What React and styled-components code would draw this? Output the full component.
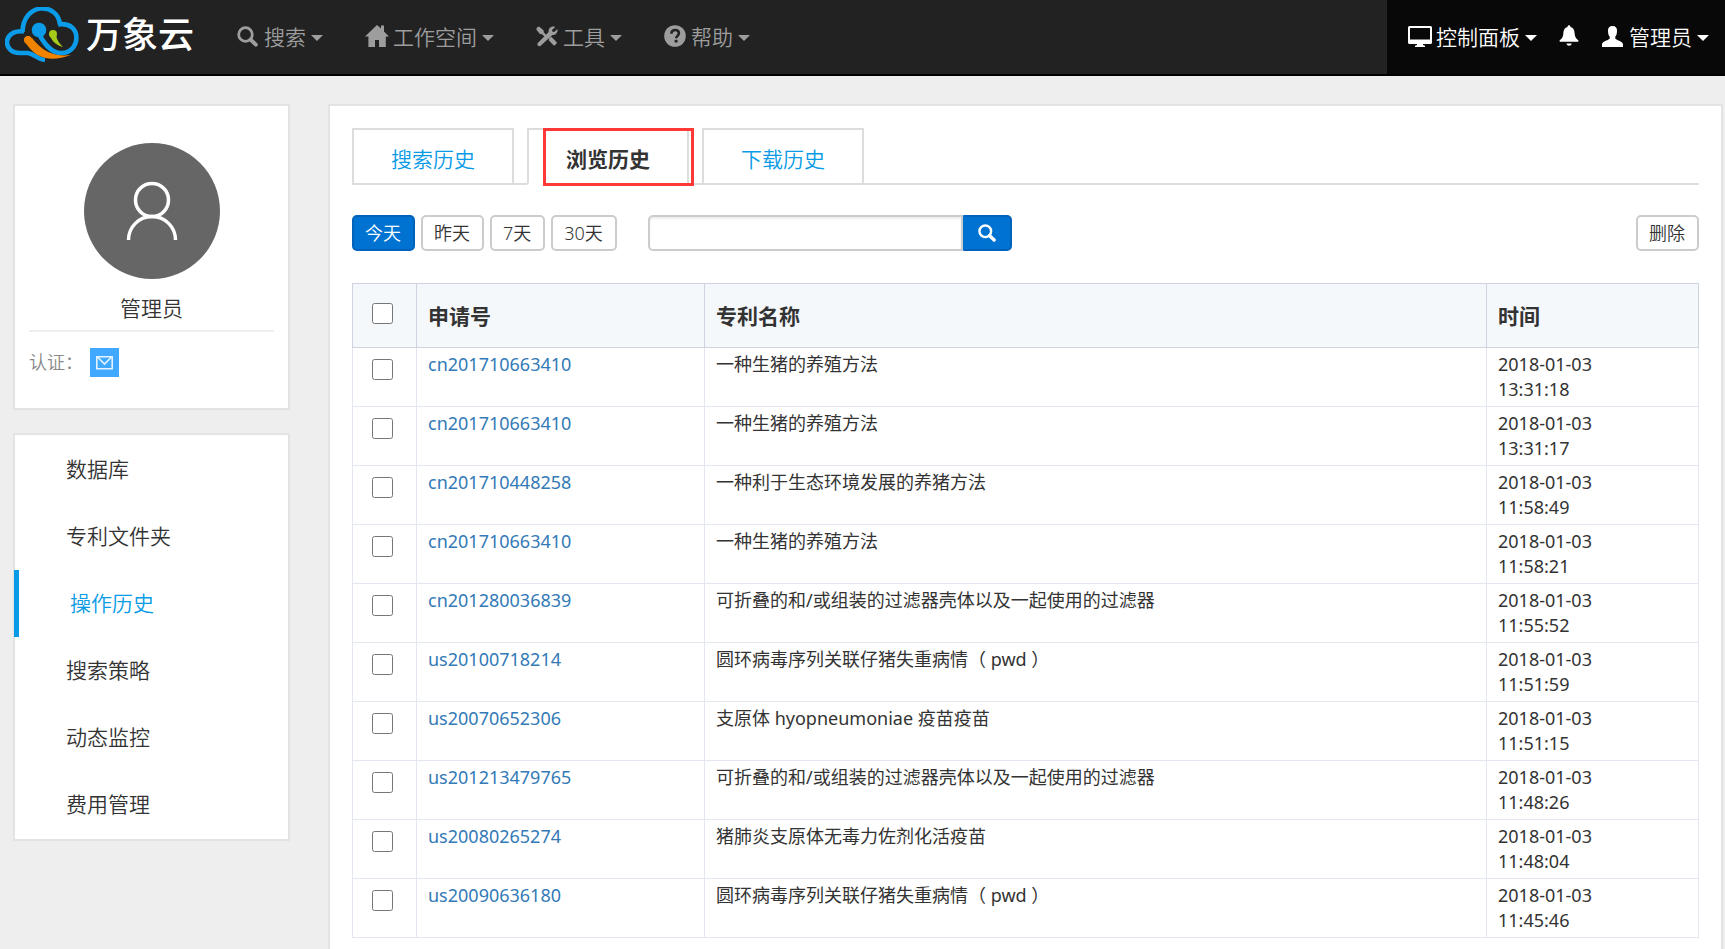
import React from 'react';
import styled, {createGlobalStyle, css} from 'styled-components';

const tabs = ['搜索历史', '浏览历史', '下载历史'];
const ranges = ['今天', '昨天', '7天', '30天'];
const menus = ['数据库', '专利文件夹', '操作历史', '搜索策略', '动态监控', '费用管理'];

const records = [
	{id: 'cn201710663410', name: '一种生猪的养殖方法', date: '2018-01-03', time: '13:31:18'},
	{id: 'cn201710663410', name: '一种生猪的养殖方法', date: '2018-01-03', time: '13:31:17'},
	{id: 'cn201710448258', name: '一种利于生态环境发展的养猪方法', date: '2018-01-03', time: '11:58:49'},
	{id: 'cn201710663410', name: '一种生猪的养殖方法', date: '2018-01-03', time: '11:58:21'},
	{id: 'cn201280036839', name: '可折叠的和/或组装的过滤器壳体以及一起使用的过滤器', date: '2018-01-03', time: '11:55:52'},
	{id: 'us20100718214', name: '圆环病毒序列关联仔猪失重病情（ pwd ）', date: '2018-01-03', time: '11:51:59'},
	{id: 'us20070652306', name: '支原体 hyopneumoniae 疫苗疫苗', date: '2018-01-03', time: '11:51:15'},
	{id: 'us201213479765', name: '可折叠的和/或组装的过滤器壳体以及一起使用的过滤器', date: '2018-01-03', time: '11:48:26'},
	{id: 'us20080265274', name: '猪肺炎支原体无毒力佐剂化活疫苗', date: '2018-01-03', time: '11:48:04'},
	{id: 'us20090636180', name: '圆环病毒序列关联仔猪失重病情（ pwd ）', date: '2018-01-03', time: '11:45:46'}
];

const SearchIcon = ({size = 21}) => (
	<Icon width={size} height={size} viewBox="0 0 21 21">
		<circle cx="8.5" cy="8.5" r="6.8" fill="none" stroke="currentColor" strokeWidth="2.8"/>
		<path d="M13.6 13.6l5.2 5" stroke="currentColor" strokeWidth="4" strokeLinecap="round"/>
	</Icon>
);

const HomeIcon = () => (
	<Icon width="24" height="22" viewBox="0 0 24 22">
		<path d="M12 0l4 3.6V.6h3v5.8l5 5.2h-3.2V22H14v-7h-4v7H3.4V11.600H0z" fill="currentColor"/>
	</Icon>
);

const ToolsIcon = () => (
	<Icon width="22" height="21" viewBox="0 0 22 21">
		<path d="M1 1.500L3 .5l4.500 3.800.4 2.300 4 3.800-1.800 1.900-4-4-2.200-.3L.3 3.400z" fill="currentColor"/>
		<path d="M13.300 12l2-1.200 5.200 5.200c1 1-1.700 4.200-3 3.200l-4.800-5z" fill="currentColor"/>
		<path d="M19.200.9l-3.200 3 .3 1.700 1.900.4 3.200-2.900c.7 3.200-1.700 6.300-5 5.800L4.700 19.800c-1.600 1.400-4.300-.9-2.900-2.700L12.700 6c-.7-3.400 2.700-6.300 6.500-5.100z" fill="currentColor"/>
	</Icon>
);

const HelpIcon = () => (
	<Icon width="22" height="22" viewBox="0 0 22 22">
		<circle cx="11" cy="11" r="10.800" fill="currentColor"/>
		<path d="M7.400 8.700c0-2.400 1.500-3.700 3.700-3.700 2.300 0 3.800 1.200 3.800 3.200 0 2.500-2.700 2.700-2.700 5.100" fill="none" stroke="#222" strokeWidth="2.600"/>
		<path d="M10.600 14.800h3v2.700h-3z" fill="#222"/>
	</Icon>
);

const MonitorIcon = () => (
	<Icon width="24" height="21" viewBox="0 0 24 21">
		<path d="M1.500 0h21A1.500 1.500 0 0124 1.500v15a1.500 1.500 0 01-1.500 1.500H15v1l2 .7V21H7v-1.300L9 19v-1H1.500A1.500 1.500 0 010 16.500v-15A1.500 1.500 0 011.500 0zM2 2v11.500h20V2z" fill="currentColor"/>
	</Icon>
);

const BellIcon = () => (
	<Icon width="20" height="22" viewBox="0 0 20 22">
		<path d="M8.500 2c0-2.500 3-2.500 3 0 3.500 1 4 4 4.200 7 .3 3.500 1.800 4.700 3.800 6.500l-.3 1.300H.8L.500 15.500C2.500 13.700 4 12.500 4.300 9c.2-3 .7-6 4.200-7z" fill="currentColor"/>
		<path d="M7.500 18.500h5.200c-.5 3-4.700 3-5.200 0z" fill="currentColor"/>
	</Icon>
);

const UserIcon = () => (
	<Icon width="21" height="21" viewBox="0 0 21 21">
		<path d="M10.500 0c3.300 0 4.800 2 4.500 5-.1 3-.6 4.500-1.700 5.600v2c.2 1.300 7.700 3 7.700 5.700V21H0v-2.700c0-2.700 7.500-4.400 7.700-5.700v-2C6.600 9.500 6.100 8 6 5c-.3-3 1.200-5 4.500-5z" fill="currentColor"/>
	</Icon>
);

const Logo = () => (
	<svg width="74" height="56" viewBox="0 0 74 56">
		<path d="M17.500 25C18-5 53-5 55 17.500" fill="none" stroke="#0a9ce8" strokeWidth="4.600"/>
		<path d="M19 24.500C-3 22-3 46 15 46h8c7 1 8 6 17 7" fill="none" stroke="#0a9ce8" strokeWidth="4.600"/>
		<path d="M53 17.500c25-4 23 29 3 28.500-9 0-15-7-21-17" fill="none" stroke="#0a9ce8" strokeWidth="4.600"/>
		<circle cx="34" cy="23" r="7.300" fill="#0a9ce8"/>
		<circle cx="23" cy="33" r="4.600" fill="#f08300" stroke="#222" strokeWidth="1"/>
		<path d="M20 35c11 18 27 20 46 13-12 1.500-26 0-39-17z" fill="#f08300"/>
		<circle cx="48" cy="27" r="4" fill="#a5ca18"/>
		<path d="M45 29c2 5 6 9 13 11-4-4-6-7-7-12z" fill="#a5ca18"/>
	</svg>
);

const Dropdown = ({icon, children}) => (
	<NavButton type="button">
		<IconSlot>{icon}</IconSlot>
		{children}
		<Caret/>
	</NavButton>
);

const Header = () => (
	<Navbar>
		<Brand href="#">
			<Logo/>
			<BrandName>万象云</BrandName>
		</Brand>
		<Nav>
			<Dropdown icon={<SearchIcon/>}>搜索</Dropdown>
			<Dropdown icon={<HomeIcon/>}>工作空间</Dropdown>
			<Dropdown icon={<ToolsIcon/>}>工具</Dropdown>
			<Dropdown icon={<HelpIcon/>}>帮助</Dropdown>
		</Nav>
		<UserNav>
			<Dropdown icon={<MonitorIcon/>}>控制面板</Dropdown>
			<BellButton type="button" aria-label="通知"><BellIcon/></BellButton>
			<Dropdown icon={<UserIcon/>}>管理员</Dropdown>
		</UserNav>
	</Navbar>
);

const Profile = () => (
	<ProfileCard>
		<Avatar viewBox="0 0 136 136">
			<circle cx="68" cy="68" r="68" fill="#666"/>
			<circle cx="68" cy="57" r="16.500" fill="none" stroke="#fff" strokeWidth="3.500"/>
			<path d="M44.500 97a23.500 23.500 0 0147 0" fill="none" stroke="#fff" strokeWidth="3.500"/>
		</Avatar>
		<UserName>管理员</UserName>
		<Certification>
			认证：
			<MailBadge viewBox="0 0 29 29">
				<path d="M0 0h29v29H0z" fill="#40a9ff"/>
				<path d="M6.800 8.800h15.400v12H6.800zM8 9.500l6.500 6.500L21 9.500" fill="none" stroke="#e4f3ff" strokeWidth="1.600"/>
			</MailBadge>
		</Certification>
	</ProfileCard>
);

const HistoryTable = () => (
	<Table>
		<colgroup>
			<Col $width={64}/>
			<Col $width={288}/>
			<Col/>
			<Col $width={212}/>
		</colgroup>
		<thead>
			<tr>
				<CheckHead><Checkbox aria-label="全选"/></CheckHead>
				<Th>申请号</Th>
				<Th>专利名称</Th>
				<Th>时间</Th>
			</tr>
		</thead>
		<tbody>
			{records.map(r => (
				<tr key={`${r.id}-${r.time}`}>
					<CheckCell><Checkbox aria-label={r.id}/></CheckCell>
					<Td><PatentLink href="#">{r.id}</PatentLink></Td>
					<Td>{r.name}</Td>
					<Td>{r.date}<br/>{r.time}</Td>
				</tr>
			))}
		</tbody>
	</Table>
);

export default function App() {
	return (
		<>
			<GlobalStyle/>
			<Header/>
			<Container>
				<Side>
					<Profile/>
					<Menu>
						{menus.map(m => <MenuItem key={m} href="#" $active={m === '操作历史'}>{m}</MenuItem>)}
					</Menu>
				</Side>
				<Main>
					<Tabs>
						{tabs.map(t => (
							<Tab key={t} type="button" $active={t === '浏览历史'}>
								{t}
								{t === '浏览历史' ? <Highlight/> : null}
							</Tab>
						))}
					</Tabs>
					<Toolbar>
						{ranges.map(r => <Button key={r} type="button" $primary={r === '今天'}>{r}</Button>)}
						<SearchForm onSubmit={e => e.preventDefault()}>
							<SearchInput type="text" aria-label="搜索"/>
							<SearchButton type="submit" aria-label="搜索"><SearchIcon size={18}/></SearchButton>
						</SearchForm>
						<Button type="button">删除</Button>
					</Toolbar>
					<HistoryTable/>
				</Main>
			</Container>
		</>
	);
}

const GlobalStyle = createGlobalStyle`
	* {
		box-sizing: border-box;
	}

	body {
		margin: 0;
		background-color: #eee;
		color: #333;
		font-family: "Noto Sans", "Noto Sans CJK SC", sans-serif;
		font-size: 21px;
		font-weight: 350;
		line-height: 30px;
	}

	button, input {
		font-family: inherit;
		font-weight: inherit;
	}

	a {
		text-decoration: none;
	}
`;

const Icon = styled.svg`
	display: block;
	flex: none;
`;

const Navbar = styled.header`
	display: flex;
	height: 76px;
	border-bottom: 2px solid #000;
	background-color: #222;
`;

const Brand = styled.a`
	display: flex;
	align-items: center;
	gap: 7px;
	width: 237px;
	padding: 0 0 4px 5px;
	color: white;
`;

const BrandName = styled.span`
	font-size: 36px;
	font-weight: 500;
`;

const Nav = styled.nav`
	display: flex;
	flex: 1;
	gap: 42px;
	padding-bottom: 2px;
	color: #9d9d9d;
`;

const UserNav = styled(Nav)`
	flex: none;
	gap: 22px;
	padding: 0 16px 2px 21px;
	background-color: #080808;
	color: white;
`;

const NavButton = styled.button`
	display: flex;
	align-items: center;
	padding: 0;
	border: 0;
	background: none;
	color: inherit;
	font-size: 21px;
	white-space: nowrap;
	cursor: pointer;
`;

const BellButton = styled(NavButton)`
	width: 21px;
`;

const IconSlot = styled.span`
	display: flex;
	min-width: 23px;
	margin-right: 4px;
`;

const Caret = styled.span`
	margin: 4px 0 0 5px;
	border: 6px solid transparent;
	border-top-color: currentColor;
	border-bottom: 0;
`;

const Container = styled.div`
	display: flex;
	align-items: flex-start;
	gap: 38px;
	padding: 28px 2px 0 13px;
`;

const Card = styled.section`
	border: 2px solid #e3e3e3;
	background-color: white;
`;

const Side = styled.aside`
	display: flex;
	flex: none;
	flex-direction: column;
	gap: 23px;
	width: 277px;
`;

const Main = styled(Card).attrs({as: 'main'})`
	flex: 1;
	min-width: 0;
	padding: 22px;
`;

const ProfileCard = styled(Card)`
	padding: 37px 14px 31px;
`;

const Avatar = styled.svg`
	display: block;
	width: 136px;
	margin: 0 auto 14px;
`;

const UserName = styled.div`
	padding-bottom: 7px;
	border-bottom: 2px solid #eee;
	text-align: center;
`;

const Certification = styled.div`
	display: flex;
	align-items: center;
	gap: 7px;
	margin-top: 15px;
	color: #888;
	font-size: 18px;
`;

const MailBadge = styled.svg`
	width: 29px;
	height: 29px;
`;

const Menu = styled(Card).attrs({as: 'nav'})`
	padding: 1px 0;
`;

const MenuItem = styled.a`
	display: block;
	padding-left: 51px;
	color: #333;
	line-height: 67px;

	${({$active}) => $active && css`
		margin-left: -1px;
		border-left: 5px solid #0a9be6;
		color: #0a9be6;
	`}
`;

const Tabs = styled.div`
	display: flex;
	gap: 13px;
	border-bottom: 2px solid #ddd;
`;

const Tab = styled.button`
	position: relative;
	width: 162px;
	height: 57px;
	margin-bottom: -2px;
	padding: 3px 0 0;
	border: 2px solid #ddd;
	border-bottom-color: ${({$active}) => $active ? 'white' : '#ddd'};
	background-color: white;
	color: ${({$active}) => $active ? '#333' : '#0a9be6'};
	font-size: 21px;
	font-weight: ${({$active}) => $active ? 'bold' : 'inherit'};
	cursor: pointer;
`;

const Highlight = styled.span`
	position: absolute;
	top: -2px;
	left: 14px;
	width: 151px;
	height: 58px;
	border: 3px solid #ff3838;
`;

const Toolbar = styled.div`
	display: flex;
	gap: 6px;
	margin: 30px 0 32px;
`;

const Button = styled.button`
	height: 36px;
	padding: 0 12px 0 11px;
	border: 2px solid ${({$primary}) => $primary ? '#0062ba' : '#ccc'};
	border-radius: 5px;
	background-color: ${({$primary}) => $primary ? '#0072d2' : 'white'};
	color: ${({$primary}) => $primary ? 'white' : '#333'};
	font-size: 18px;
	line-height: 26px;
	white-space: nowrap;
	cursor: pointer;
`;

const SearchForm = styled.form`
	display: flex;
	width: 364px;
	margin: 0 auto 0 25px;
`;

const SearchInput = styled.input`
	flex: 1;
	min-width: 0;
	height: 36px;
	padding: 0 12px;
	border: 2px solid #ccc;
	border-radius: 5px 0 0 5px;
	box-shadow: inset 0 2px 2px rgba(0, 0, 0, 0.07);
	font-size: 18px;
`;

const SearchButton = styled.button`
	display: flex;
	align-items: center;
	justify-content: center;
	width: 49px;
	border: 2px solid #0062ba;
	border-left-color: #0072d2;
	border-radius: 0 5px 5px 0;
	background-color: #0072d2;
	color: white;
	cursor: pointer;
`;

const Table = styled.table`
	width: 100%;
	border-collapse: collapse;
	table-layout: fixed;
`;

const Col = styled.col`
	width: ${({$width}) => $width ? `${$width}px` : 'auto'};
`;

const Th = styled.th`
	height: 64px;
	padding: 0 11px;
	border: 1px solid #cfd4e0;
	background-color: #f5f8fa;
	text-align: left;
`;

const Td = styled.td`
	height: 59px;
	padding: 4px 11px;
	border: 1px solid #e3e7f0;
	font-size: 18px;
	font-weight: 400;
	line-height: 25px;
	vertical-align: top;
`;

const CheckHead = styled(Th)`
	padding: 0 0 4px 19px;
`;

const CheckCell = styled(Td)`
	padding: 11px 0 0 19px;
`;

const Checkbox = styled.input.attrs({type: 'checkbox'})`
	display: block;
	width: 21px;
	height: 21px;
	margin: 0;
`;

const PatentLink = styled.a`
	color: #337ab7;
`;
